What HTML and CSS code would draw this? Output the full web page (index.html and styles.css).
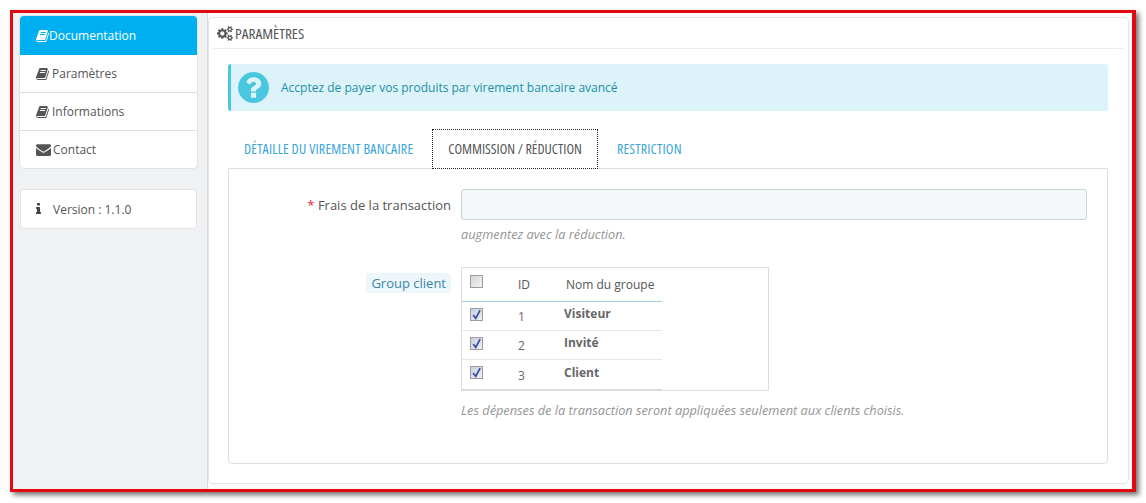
FILE: index.html
```html
<!DOCTYPE html>
<html lang="fr">
<head>
<meta charset="utf-8">
<title>Paramètres</title>
<link rel="stylesheet" href="styles.css">
</head>
<body>
<svg class="defs" aria-hidden="true">
  <symbol id="book" viewBox="0 0 1792 1792"><path d="M1639 478q40 57 18 129l-275 906q-19 64-76.500 107.500t-122.500 43.500h-923q-77 0-148.500-53.500t-99.500-131.500q-24-67-2-127 0-4 3-27t4-37q1-8-3-21.500t-3-19.500q2-11 8-21t16.500-23.500 16.500-23.500q23-38 45-91.500t30-91.500q3-10 .5-30t-.5-28q3-11 17-28t17-23q21-36 42-92t25-90q1-9-2.500-32t.5-28q4-13 22-30.500t22-22.500q19-26 42.500-84.500t27.500-96.500q1-8-3-25.500t-2-26.500q2-8 9-18t18-23 17-21q8-12 16.500-30.500t15-35 16-36 19.500-32 26.500-23.500 36-11.500 47.500 5.500l-1 3q38-9 51-9h761q74 0 114 56t18 130l-274 906q-36 119-71.500 153.500t-128.500 34.500h-869q-27 0-38 15-11 16-1 43 24 70 144 70h923q29 0 56-15.500t35-41.500l300-987q7-22 5-57 38 15 59 43zm-1064 2q-4 13 2 22.500t20 9.500h608q13 0 25.500-9.500t16.500-22.500l21-64q4-13-2-22.500t-20-9.500h-608q-13 0-25.500 9.500t-16.500 22.500zm-83 256q-4 13 2 22.500t20 9.500h608q13 0 25.500-9.500t16.500-22.500l21-64q4-13-2-22.500t-20-9.500h-608q-13 0-25.500 9.500t-16.500 22.500z"/></symbol>
  <symbol id="envelope" viewBox="0 0 1792 1792"><path d="M1792 710v794q0 66-47 113t-113 47h-1472q-66 0-113-47t-47-113v-794q44 49 101 87 362 246 497 345 57 42 92.500 65.500t94.500 48 110 24.500h2q51 0 110-24.500t94.500-48 92.500-65.500q170-123 498-345 57-39 100-87zm0-294q0 79-49 151t-122 123q-376 261-468 325-10 7-42.500 30.500t-54 38-52 32.500-57.500 27-50 9h-2q-23 0-50-9t-57.500-27-52-32.500-54-38-42.500-30.500q-91-64-262-182.500t-205-142.500q-62-42-117-115.500t-55-136.500q0-78 41.500-130t118.500-52h1472q65 0 112.500 45t47.500 115z"/></symbol>
  <symbol id="info" viewBox="0 0 640 1792"><path d="M640 1344v128q0 26-19 45t-45 19h-512q-26 0-45-19t-19-45v-128q0-26 19-45t45-19h64v-384h-64q-26 0-45-19t-19-45v-128q0-26 19-45t45-19h384q26 0 45 19t19 45v576h64q26 0 45 19t19 45zm-128-1152v192q0 26-19 45t-45 19h-256q-26 0-45-19t-19-45v-192q0-26 19-45t45-19h256q26 0 45 19t19 45z"/></symbol>
  <symbol id="cogs" viewBox="0 0 1920 1792"><path d="M896 896q0-106-75-181t-181-75-181 75-75 181 75 181 181 75 181-75 75-181zm768 512q0-52-38-90t-90-38-90 38-38 90q0 53 37.500 90.500t90.500 37.500 90.500-37.500 37.500-90.500zm0-1024q0-52-38-90t-90-38-90 38-38 90q0 53 37.500 90.500t90.500 37.500 90.500-37.500 37.500-90.500zm-384 421v185q0 10-7 19.500t-16 10.500l-155 24q-11 35-32 76 34 48 90 115 7 11 7 20 0 12-7 19-23 30-82.500 89.500t-78.500 59.500q-11 0-21-7l-115-90q-37 19-77 31-11 108-23 155-7 24-30 24h-186q-11 0-20-7.500t-10-17.500l-23-153q-34-10-75-31l-118 89q-7 7-20 7-11 0-21-8-144-133-144-160 0-9 7-19 10-14 41-53t47-61q-23-44-35-82l-152-24q-10-1-17-9.500t-7-19.500v-185q0-10 7-19.500t16-10.500l155-24q11-35 32-76-34-48-90-115-7-11-7-20 0-12 7-20 22-30 82-89t79-59q11 0 21 7l115 90q34-18 77-32 11-108 23-154 7-24 30-24h186q11 0 20 7.500t10 17.500l23 153q34 10 75 31l118-89q8-7 20-7 11 0 21 8 144 133 144 160 0 8-7 19-12 16-42 54t-45 60q23 48 34 82l152 23q10 2 17 10.500t7 19.500zm640 533v140q0 16-149 31-12 27-30 52 51 113 51 138 0 4-4 7-122 71-124 71-8 0-46-47t-52-68q-20 2-30 2t-30-2q-14 21-52 68t-46 47q-2 0-124-71-4-3-4-7 0-25 51-138-18-25-30-52-149-15-149-31v-140q0-16 149-31 13-29 30-52-51-113-51-138 0-4 4-7 4-2 35-20t59-34 30-16q8 0 46 46.500t52 67.500q20-2 30-2t30 2q51-71 92-112l6-2q4 0 124 70 4 3 4 7 0 25-51 138 17 23 30 52 149 15 149 31zm0-1024v140q0 16-149 31-12 27-30 52 51 113 51 138 0 4-4 7-122 71-124 71-8 0-46-47t-52-68q-20 2-30 2t-30-2q-14 21-52 68t-46 47q-2 0-124-71-4-3-4-7 0-25 51-138-18-25-30-52-149-15-149-31v-140q0-16 149-31 13-29 30-52-51-113-51-138 0-4 4-7 4-2 35-20t59-34 30-16q8 0 46 46.500t52 67.500q20-2 30-2t30 2q51-71 92-112l6-2q4 0 124 70 4 3 4 7 0 25-51 138 17 23 30 52 149 15 149 31z"/></symbol>
  <symbol id="question" viewBox="0 0 1536 1536"><path transform="translate(-128 -128)" d="M1024 1376v-192q0-14-9-23t-23-9h-192q-14 0-23 9t-9 23v192q0 14 9 23t23 9h192q14 0 23-9t9-23zm256-672q0-88-55.500-163t-138.500-116-170-41q-243 0-371 213-15 24 8 42l132 100q7 6 19 6 16 0 25-12 53-68 86-92 34-24 86-24 48 0 85.500 26t37.500 59q0 38-20 61t-68 45q-63 28-115.500 86.500t-52.500 125.500v36q0 14 9 23t23 9h192q14 0 23-9t9-23q0-19 21.500-49.500t54.500-49.500q32-18 49-28.500t46-35 44.500-48 28-60.500 12.500-81zm384 192q0 209-103 385.500t-279.500 279.500-385.500 103-385.500-103-279.500-279.500-103-385.500 103-385.500 279.500-279.500 385.500-103 385.500 103 279.500 279.500 103 385.500z"/></symbol>
  <symbol id="tick" viewBox="0 0 9 10"><path d="M1.500 5.500 L3.800 8.500 L7.800 1" fill="none" stroke="#3b4f9e" stroke-width="1.600"/></symbol>
</svg>

<div class="frame">
  <aside class="sidebar">
    <nav class="menu">
      <a class="menu-item active"><svg class="ico book-tight"><use href="#book"/></svg>Documentation</a>
      <a class="menu-item"><svg class="ico"><use href="#book"/></svg>Paramètres</a>
      <a class="menu-item"><svg class="ico"><use href="#book"/></svg>Informations</a>
      <a class="menu-item"><svg class="ico ico-mail"><use href="#envelope"/></svg>Contact</a>
    </nav>
    <div class="version"><svg class="ico-info"><use href="#info"/></svg>Version : 1.1.0</div>
  </aside>

  <main class="main">
    <section class="card">
      <h2 class="card-title"><svg class="ico-cogs"><use href="#cogs"/></svg>PARAMÈTRES</h2>
      <div class="alert">
        <svg class="ico-question"><use href="#question"/></svg>
        <span>Accptez de payer vos produits par virement bancaire avancé</span>
      </div>
      <ul class="tabs">
        <li class="tab">DÉTAILLE DU VIREMENT BANCAIRE</li>
        <li class="tab tab-active">COMMISSION / RÉDUCTION</li>
        <li class="tab">RESTRICTION</li>
      </ul>
      <div class="tab-body">
        <div class="row">
          <label class="label"><span class="req">*</span> Frais de la transaction</label>
          <div class="field">
            <input class="input" type="text">
            <p class="help">augmentez avec la réduction.</p>
          </div>
        </div>
        <div class="row row-group">
          <label class="label"><span class="hint">Group client</span></label>
          <div class="field">
            <div class="table-box">
              <table class="groups">
                <thead>
                  <tr>
                    <th class="c-check"><span class="cb"></span></th>
                    <th class="c-id">ID</th>
                    <th class="c-name">Nom du groupe</th>
                  </tr>
                </thead>
                <tbody>
                  <tr>
                    <td class="c-check"><span class="cb"><svg class="tick"><use href="#tick"/></svg></span></td>
                    <td class="c-id">1</td>
                    <td class="c-name">Visiteur</td>
                  </tr>
                  <tr>
                    <td class="c-check"><span class="cb"><svg class="tick"><use href="#tick"/></svg></span></td>
                    <td class="c-id">2</td>
                    <td class="c-name">Invité</td>
                  </tr>
                  <tr>
                    <td class="c-check"><span class="cb"><svg class="tick"><use href="#tick"/></svg></span></td>
                    <td class="c-id">3</td>
                    <td class="c-name">Client</td>
                  </tr>
                </tbody>
              </table>
            </div>
            <p class="help help-2">Les dépenses de la transaction seront appliquées seulement aux clients choisis.</p>
          </div>
        </div>
      </div>
    </section>
  </main>
</div>
</body>
</html>
```

FILE: styles.css
```css
* { box-sizing: border-box; }
html, body { margin: 0; padding: 0; }
body {
  width: 1146px;
  height: 503px;
  background: #fff;
  font-family: "Open Sans", sans-serif;
  font-size: 12px;
  color: #555;
  overflow: hidden;
}
.defs { display: none; }

.frame {
  display: flex;
  width: 1126px;
  height: 482px;
  margin: 10px 0 0 10px;
  border: 3px solid #e20a10;
  border-right-width: 4px;
  box-shadow: 3px 3px 5px rgba(0, 0, 0, .55);
  background: #fff;
}

.sidebar {
  flex: none;
  width: 195px;
  padding: 3px 10px 0 7px;
  background: #eff1f2;
  border-right: 1px solid #d8dadd;
}
.menu {
  background: #fff;
  border-radius: 4px;
  box-shadow: 0 0 0 1px #e1e3e5;
  overflow: hidden;
}
.menu-item {
  display: flex;
  align-items: center;
  height: 38px;
  padding-left: 16px;
  color: #555;
  border-bottom: 1px solid #dcdee0;
}
.menu-item:last-child { border-bottom: 0; height: 37px; }
.menu-item.active {
  height: 39px;
  color: #fff;
  background: #00aff0;
  border-bottom: 0;
}
.ico {
  width: 14px;
  height: 14px;
  margin-right: 2px;
  fill: currentColor;
}
.ico-mail { width: 15px; height: 15px; margin-right: 2px; }
.book-tight { margin-right: -1px; }

.version {
  display: flex;
  align-items: center;
  height: 40px;
  margin-top: 21px;
  padding-left: 15px;
  background: #fff;
  border: 1px solid #e1e3e5;
  border-radius: 4px;
  color: #555;
}
.ico-info {
  width: 5px;
  height: 14px;
  margin-right: 12px;
  fill: #444;
}

.main {
  flex: 1;
  min-width: 0;
  padding: 4px 3px 5px 0;
  background: #fbfbfc;
}
.card {
  height: 467px;
  padding: 0 20px 0 19px;
  background: #fff;
  border: 1px solid #e3e5e7;
  border-radius: 5px;
}
.card-title {
  display: flex;
  align-items: center;
  height: 31px;
  margin: 0 -16px 0 -15px;
  padding-left: 4px;
  font-family: "Open Sans", sans-serif;
  font-stretch: 75%;
  font-size: 15.3px;
  font-weight: 400;
  color: #555;
  border-bottom: 1px solid #eeeeee;
}
.ico-cogs {
  width: 16px;
  height: 15px;
  margin-right: 2px;
  fill: #555;
}

.alert {
  display: flex;
  align-items: center;
  height: 47px;
  margin-top: 15px;
  padding-left: 7px;
  background: #dcf4f9;
  border-left: 3px solid #4ac7e0;
  border-radius: 3px;
  color: #1e8ea6;
  font-size: 12px;
}
.ico-question {
  width: 31px;
  height: 31px;
  margin-right: 12px;
  fill: #4ac7e0;
}

.tabs {
  display: flex;
  height: 40px;
  margin: 18px 0 -1px;
  padding: 0;
  list-style: none;
  position: relative;
  z-index: 1;
}
.tab {
  display: flex;
  align-items: center;
  padding: 0 15px 2px 15px;
  font-stretch: 75%;
  font-size: 14px;
  font-weight: 500;
  color: #3aa6d8;
  border: 1px solid transparent;
}
.tab:first-child { margin-right: 3px; letter-spacing: .2px; }
.tab:last-child { letter-spacing: .2px; }
.tab-active {
  margin-right: 3px;
  background: #fff;
  color: #555;
  border: 1px dotted #222;
}

.tab-body {
  height: 296px;
  padding-top: 20px;
  background: #fff;
  border: 1px solid #dcdfe2;
  border-radius: 0 0 4px 4px;
}
.row { display: flex; }
.row-group { margin-top: 24px; }
.label {
  flex: none;
  width: 222px;
  padding-top: 7px;
  text-align: right;
  color: #555;
  font-size: 13px;
}
.row-group .label { padding-top: 6px; }
.req { color: #e3262c; }
.hint {
  display: inline-block;
  padding: 1px 5px;
  color: #3a85a8;
  background: #edf7fb;
  border-radius: 2px;
  font-size: 13px;
}
.field { margin-left: 10px; width: 626px; }
.input {
  display: block;
  width: 100%;
  height: 31px;
  background: #f5f8f9;
  border: 1px solid #c7d6db;
  border-radius: 3px;
}
.help {
  margin: 5px 0 0;
  color: #959595;
  font-size: 12.75px;
  font-style: italic;
}
.help-2 { margin-top: 10px; }

.table-box {
  width: 308px;
  height: 124px;
  border: 1px solid #dcdfe2;
}
.groups {
  width: 200px;
  border-collapse: collapse;
  font-size: 12px;
}
.groups th {
  height: 33px;
  font-weight: 400;
  text-align: left;
  color: #555;
  border-bottom: 1px solid #9fd0dd;
  vertical-align: middle;
}
.groups td {
  height: 29px;
  border-bottom: 1px solid #e6e8ea;
  color: #555;
}
.groups tbody tr:last-child td { height: 30px; border-bottom-color: #d8dadc; }
.c-check { width: 56px; padding: 0 0 0 8px; }
.c-id { width: 46px; padding: 0; }
td.c-id { padding-top: 2px; color: #666; }
td.c-name { font-weight: 700; padding: 0 0 4px 0; color: #666; }
th.c-name { padding: 0 0 0 2px; }
.cb {
  display: block;
  width: 13px;
  height: 13px;
  background: linear-gradient(135deg, #d4d4d4, #f3f3f3);
  border: 1px solid #9a9ca0;
}
td .cb { margin-bottom: 3px; background: linear-gradient(135deg, #c8cee0, #eef0f6); }
th .cb { margin-bottom: 5px; }
.tick { display: block; width: 11px; height: 11px; }
```
